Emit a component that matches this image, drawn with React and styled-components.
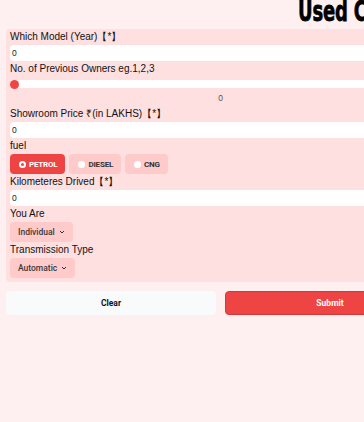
import React, { useState } from "react";
import styled, { createGlobalStyle } from "styled-components";

const Global = createGlobalStyle`
  html, body { margin: 0; padding: 0; overflow: hidden; background: #fef0f0; }
  body { font-family: "Liberation Sans", Arial, sans-serif; color: #111; }
`;

const Page = styled.div`
  width: 429px;
  padding: 0 6px;
  min-height: 422px;
  background: #fef0f0;
`;

const Header = styled.h1`
  margin: 0;
  height: 29px;
  padding-left: 292px;
  white-space: nowrap;
  overflow: hidden;
`;

const Title = styled.span`
  display: inline-block;
  vertical-align: top;
  transform: scaleX(0.62);
  transform-origin: left center;
  font-family: "DejaVu Sans", "Liberation Sans", sans-serif;
  font-weight: 700;
  font-size: 29px;
  line-height: 22px;
  letter-spacing: -0.3px;
  -webkit-text-stroke: 0.8px #000;
  color: #000;
`;

const Panel = styled.form`
  display: flex;
  flex-direction: column;
  gap: 1px;
  background: #fee0e0;
  border-radius: 4px;
  padding: 1px 4px 4px;
`;

const Label = styled.label`
  font-size: 10px;
  line-height: 14px;
  color: #111;
  white-space: nowrap;
`;

const Input = styled.input`
  height: 16px;
  border: none;
  border-radius: 4px;
  background: #fff;
  padding: 0 2px;
  font-size: 8.5px;
  font-family: "Liberation Sans", Arial, sans-serif;
  color: #222;
  outline: none;
  box-sizing: border-box;
`;

const Range = styled.input`
  -webkit-appearance: none;
  appearance: none;
  margin: 3px 0 1px;
  height: 8px;
  border-radius: 4px;
  background: #fff;
  outline: none;
  &::-webkit-slider-thumb {
    -webkit-appearance: none;
    width: 9px;
    height: 9px;
    border-radius: 50%;
    background: #ef4444;
    border: none;
  }
`;

const RangeValue = styled.div`
  text-align: center;
  font-size: 8.5px;
  line-height: 16px;
  color: #555;
`;

const ChipRow = styled.div`
  display: flex;
  gap: 4px;
`;

const Chip = styled.button`
  display: flex;
  align-items: center;
  gap: 3px;
  height: 20px;
  padding: 0 8px 0 9px;
  border: none;
  border-radius: 4px;
  font-family: Roboto, "Liberation Sans", sans-serif;
  font-weight: 700;
  font-size: 8px;
  letter-spacing: -0.2px;
  background: ${(p) => (p.$active ? "#ef4444" : "#fecaca")};
  color: ${(p) => (p.$active ? "#fff" : "#333")};
`;

const Dot = styled.span`
  width: 7px;
  height: 7px;
  border-radius: 50%;
  background: #fff;
  display: flex;
  align-items: center;
  justify-content: center;
  &::after {
    content: "";
    width: 3px;
    height: 3px;
    border-radius: 50%;
    background: ${(p) => (p.$active ? "#ef4444" : "transparent")};
  }
`;

const Select = styled.button`
  align-self: flex-start;
  display: flex;
  align-items: center;
  gap: 4px;
  height: 20px;
  padding: 0 8px;
  border: none;
  border-radius: 4px;
  background: #fecaca;
  font-family: Roboto, "Liberation Sans", sans-serif;
  font-size: 8.5px;
  font-weight: 500;
  color: #3a3a3a;
`;

const Actions = styled.div`
  display: grid;
  grid-template-columns: 1fr 1fr;
  gap: 9px;
  margin-top: 9px;
`;

const ActionButton = styled.button`
  height: 24px;
  border-radius: 4px;
  border: 1px solid ${(p) => (p.$primary ? "#d93636" : "#f9fafb")};
  background: ${(p) => (p.$primary ? "#ef4444" : "#f9fafb")};
  color: ${(p) => (p.$primary ? "#fff" : "#111")};
  font-family: Roboto, "Liberation Sans", sans-serif;
  font-weight: 700;
  font-size: 8.5px;
`;

const Chevron = () => (
  <svg width="6" height="4" viewBox="0 0 6 4" fill="none">
    <path d="M1 1l2 2 2-2" stroke="#333" strokeWidth="1" />
  </svg>
);

export default function App() {
  const [fuel, setFuel] = useState("PETROL");
  return (
    <Page>
      <Global />
      <Header>
        <Title>Used Car Price Prediction</Title>
      </Header>
      <Panel onSubmit={(e) => e.preventDefault()}>
        <Label>Which Model (Year)【*】</Label>
        <Input defaultValue="0" />
        <Label>No. of Previous Owners eg.1,2,3</Label>
        <Range type="range" min="0" max="3" defaultValue="0" />
        <RangeValue>0</RangeValue>
        <Label>Showroom Price ₹(in LAKHS)【*】</Label>
        <Input defaultValue="0" />
        <Label>fuel</Label>
        <ChipRow>
          {["PETROL", "DIESEL", "CNG"].map((f) => (
            <Chip key={f} type="button" $active={fuel === f} onClick={() => setFuel(f)}>
              <Dot $active={fuel === f} />
              {f}
            </Chip>
          ))}
        </ChipRow>
        <Label>Kilometeres Drived【*】</Label>
        <Input defaultValue="0" />
        <Label>You Are</Label>
        <Select type="button">
          Individual <Chevron />
        </Select>
        <Label>Transmission Type</Label>
        <Select type="button">
          Automatic <Chevron />
        </Select>
      </Panel>
      <Actions>
        <ActionButton type="button">Clear</ActionButton>
        <ActionButton type="button" $primary>Submit</ActionButton>
      </Actions>
    </Page>
  );
}
